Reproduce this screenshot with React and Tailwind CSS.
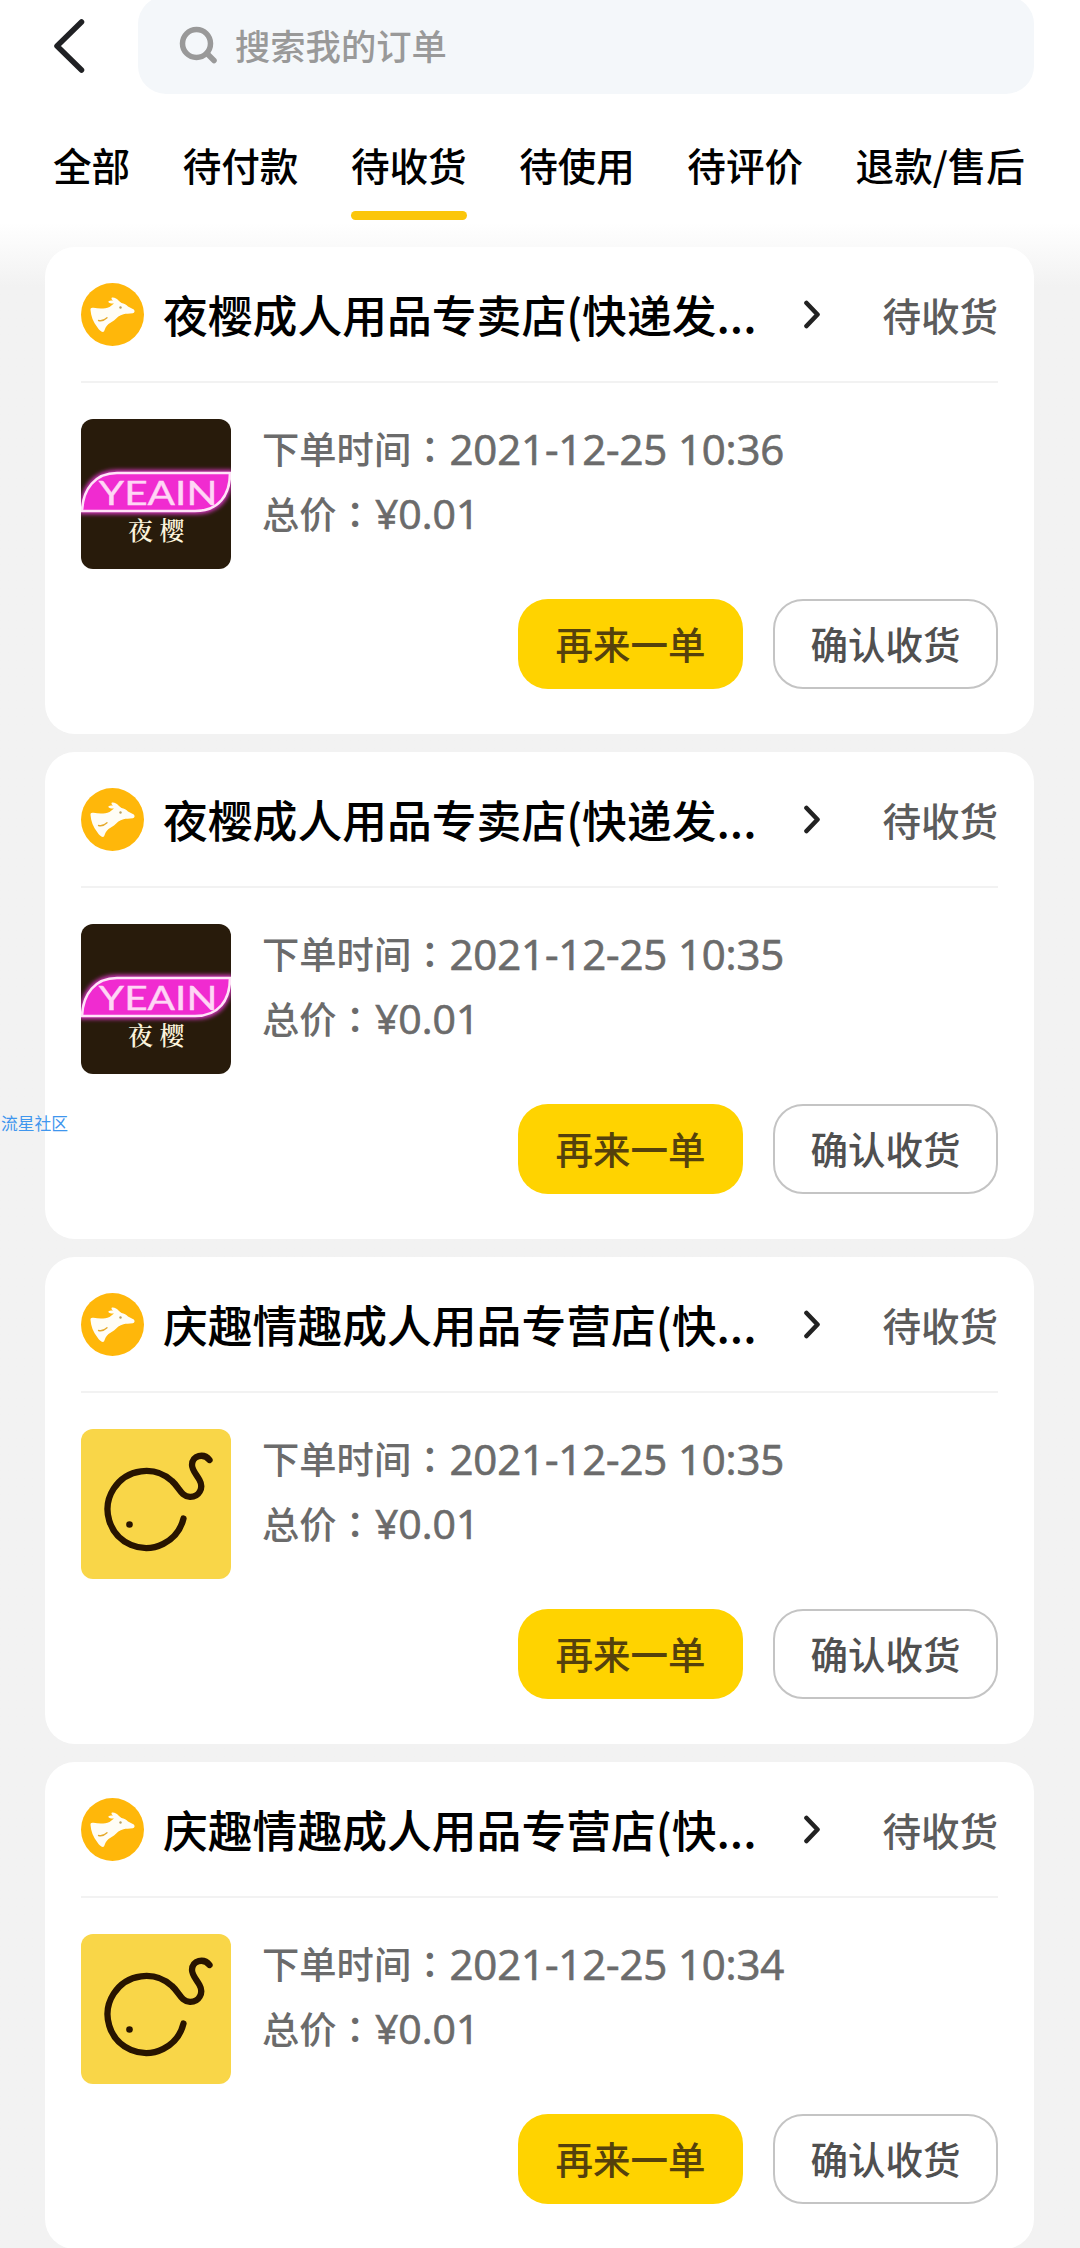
import React from "react";

const orders = [
  { shop: "夜樱成人用品专卖店(快递发...", time: "2021-12-25 10:36", thumb: "yeain" },
  { shop: "夜樱成人用品专卖店(快递发...", time: "2021-12-25 10:35", thumb: "yeain" },
  { shop: "庆趣情趣成人用品专营店(快...", time: "2021-12-25 10:35", thumb: "whale" },
  { shop: "庆趣情趣成人用品专营店(快...", time: "2021-12-25 10:34", thumb: "whale" },
];

const tabs = ["全部", "待付款", "待收货", "待使用", "待评价", "退款/售后"];

function ShopLogo() {
  return (
    <svg viewBox="0 0 63 63" className="h-[63px] w-[63px] shrink-0">
      <circle cx="31.5" cy="31.5" r="31.5" fill="#ffb70a" />
      <path
        d="M9.500 27C9.300 25 10.500 24.300 12.500 24.800C18 26 24 26 28.500 24L33 20.500C30 20.800 27.500 20 27.300 18.400C28.500 17.600 30.500 17.400 32 17.600C30.500 16.600 30 15.300 31 14.600C33.500 14.300 36 15.500 38 18L40.500 20C43 20.500 45.500 21.500 47 23.500L52.800 26.500C54.300 28 53.600 29.800 51.800 30.300C48 31 45 30.500 42.500 31.200C38.500 32 36 34.500 33 37.500L27.500 41C24.500 43.500 24 46 23 48.500C21 50 18.500 47.500 16.500 44.500C12 39 10 33 9.500 27Z"
        fill="#fffdf6"
      />
      <path d="M17.500 37.500C20.500 38.300 23.500 37.200 26 34.800" fill="none" stroke="#e5a92a" strokeWidth="1.300" strokeLinecap="round" />
      <circle cx="39.500" cy="24.500" r="1.200" fill="#b9a060" />
    </svg>
  );
}

function YeainThumb() {
  return (
    <svg viewBox="0 0 150 150" className="h-[150px] w-[150px] shrink-0 rounded-xl">
      <defs>
        <filter id="glow" x="-20%" y="-30%" width="140%" height="160%">
          <feGaussianBlur stdDeviation="2" />
        </filter>
      </defs>
      <rect width="150" height="150" fill="#281b0b" />
      <path d="M1 92C2 70 14 54 36 54H149C149 76 138 92 114 92Z" fill="none" stroke="#d936c4" strokeWidth="6" filter="url(#glow)" />
      <path d="M1 92C2 70 14 54 36 54H149C149 76 138 92 114 92Z" fill="#f02bd0" stroke="#ffe3f8" strokeWidth="2.600" />
      <text
        x="13"
        y="86"
        textLength="104"
        lengthAdjust="spacingAndGlyphs"
        fontSize="32"
        fill="#ffd6f5"
        stroke="#ffd6f5"
        strokeWidth="0.400"
        transform="translate(3 0) scale(1.140 1)"
        className="font-['Lato',sans-serif]"
      >
        YEAIN
      </text>
      <text x="47" y="121" fontSize="25" fontWeight="600" letterSpacing="6.500" fill="#fbf3dc" className="font-['Noto_Serif_CJK_SC','Noto_Sans_CJK_SC',serif]">
        夜樱
      </text>
    </svg>
  );
}

function WhaleThumb() {
  return (
    <svg viewBox="0 0 150 150" className="h-[150px] w-[150px] shrink-0 rounded-xl">
      <rect width="150" height="150" fill="#f9d648" />
      <path
        d="M102.500 89.500A38.500 38.500 0 1 1 91 52C98 58 100 67.500 109 67.800C118 68 123 59 118.500 51C115 45 111 41 111 36C111 26 123 24 128.500 31"
        fill="none"
        stroke="#281400"
        strokeWidth="6.300"
        strokeLinecap="round"
      />
      <circle cx="48.500" cy="95.500" r="3.300" fill="#281400" />
    </svg>
  );
}

function Colon() {
  return (
    <span className="font-['Noto_Sans_CJK_TC',sans-serif]" lang="zh-TW">
      ：
    </span>
  );
}

function OrderCard({ order }) {
  return (
    <section className="h-[487px] shrink-0 rounded-[30px] bg-white px-9">
      <div className="flex h-[136px] items-center border-b-2 border-[#f2f2f2]">
        <ShopLogo />
        <h2 className="ml-[19px] w-[614px] text-[44.8px] leading-[60px] font-medium whitespace-nowrap text-black">
          {order.shop}
        </h2>
        <svg viewBox="0 0 20 30" className="ml-[25px] h-[30px] w-5" fill="none" stroke="#222" strokeWidth="4.600" strokeLinecap="round" strokeLinejoin="round">
          <path d="M4.500 4L15.500 15.500L4.500 27" />
        </svg>
        <span className="ml-auto text-[38.5px] leading-[50px] font-medium text-[#5c5c5c]">待收货</span>
      </div>
      <div className="mt-9 flex">
        {order.thumb === "yeain" ? <YeainThumb /> : <WhaleThumb />}
        <div className="-mt-[3px] ml-[31px] text-[37.3px] leading-[65px] font-medium whitespace-nowrap text-[#6b6b6b]">
          <p className="flex h-[65px]">
            下单时间
            <Colon />
            <span className="ml-px font-['Open_Sans',sans-serif] text-[42px] tracking-[-0.15px] [-webkit-text-stroke:0.7px_#6b6b6b]">{order.time}</span>
          </p>
          <p className="flex h-[65px]">
            总价
            <Colon />
            <span className="ml-px font-['Open_Sans',sans-serif] text-[41px] [-webkit-text-stroke:0.7px_#6b6b6b]">¥0.01</span>
          </p>
        </div>
      </div>
      <div className="mt-[30px] flex justify-end gap-[30px] text-[37.5px] leading-[84px]">
        <button className="h-[90px] w-[225px] rounded-[30px] bg-[#ffd300] pb-0.5 font-medium text-[#55410c]">再来一单</button>
        <button className="h-[90px] w-[225px] rounded-[30px] border-2 border-[#c4c4c4] pb-0.5 font-medium text-[#505050]">确认收货</button>
      </div>
    </section>
  );
}

export default function App() {
  return (
    <div className="relative h-[2248px] w-[1080px] overflow-hidden bg-[#f2f2f2] font-['Noto_Sans_CJK_SC',sans-serif]" lang="zh-CN">
      <header className="h-[247px] bg-linear-to-b from-white from-90% to-[#fafafa]">
        <div className="flex h-[94px] pl-[52px]">
          <svg viewBox="0 0 34 58" className="mt-[17px] h-[58px] w-[34px]" fill="none" stroke="#202124" strokeWidth="5.500" strokeLinecap="round" strokeLinejoin="round">
            <path d="M29.500 5L5 29L29.500 53" />
          </svg>
          <div className="-mt-1 ml-[52px] flex h-[98px] w-[896px] items-center rounded-[28px] bg-[#f4f7fa] pl-[41px]">
            <svg viewBox="0 0 40 40" className="h-10 w-10" fill="none" stroke="#999" strokeWidth="5.500" strokeLinecap="round">
              <circle cx="17.500" cy="18.500" r="14" />
              <path d="M28 28.500L35 35.500" />
            </svg>
            <span className="ml-4 text-[35.3px] leading-[50px] font-medium text-[#999]">搜索我的订单</span>
          </div>
        </div>
        <nav className="flex gap-[52.5px] pt-[45px] pl-[53px] text-[38.6px] leading-[50px] font-medium whitespace-nowrap text-black">
          {tabs.map((tab) => (
            <div key={tab} className="flex flex-col">
              <span>{tab}</span>
              {tab === "待收货" && <span className="mt-[22px] h-[9px] rounded-full bg-[#fbc60a]" />}
            </div>
          ))}
        </nav>
      </header>
      <div className="bg-linear-to-b from-[#fafafa] to-[#f2f2f2] to-[40px]">
        <main className="flex flex-col gap-[18px] pr-[46px] pl-[45px]">
          {orders.map((order, i) => (
            <OrderCard key={i} order={order} />
          ))}
        </main>
      </div>
      <span className="absolute top-[1111px] left-px text-[16.800px] leading-6 text-[#3f96ee]">流星社区</span>
    </div>
  );
}
